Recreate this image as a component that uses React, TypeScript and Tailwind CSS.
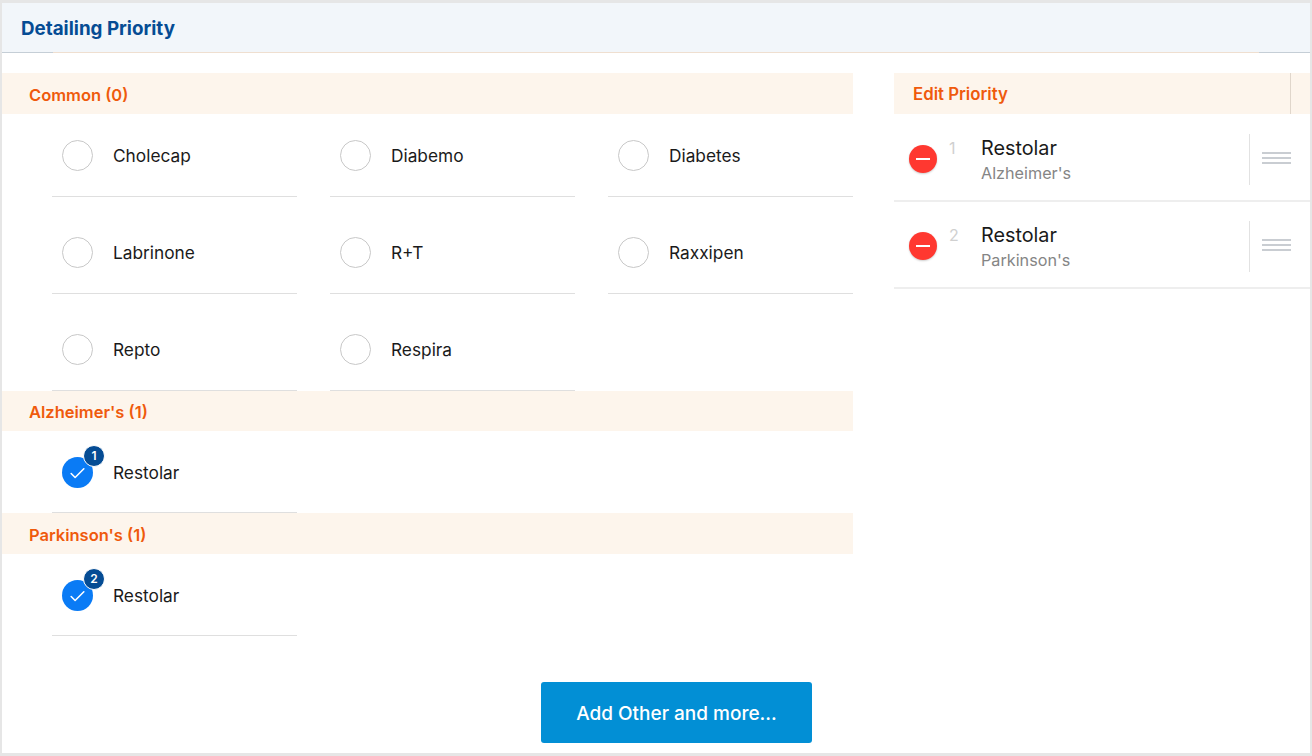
import React from 'react';
import { Check } from 'lucide-react';

const font = "font-['Inter','Noto_Sans',sans-serif]";

type Item = { name: string; badge?: number };

const SectionTitle = ({ title, short }: { title: string; short?: boolean }) => (
  <div className={`${short ? 'h-[40px] pt-[2px]' : 'h-[41px] pt-[3px]'} shrink-0 bg-[#fdf5ec] pl-[27px] flex items-center text-[16.5px] font-semibold text-[#ef5a0c]`}>
    {title}
  </div>
);

const Option = ({ name, badge, dense }: Item & { dense?: boolean }) => (
  <div className={`${dense ? 'h-[82px] pt-[2px]' : 'h-[83px]'} border-b border-[#dfdfdf] pl-[10px] flex items-center`}>
    {badge ? (
      <span className="relative w-[31px] h-[31px] rounded-full bg-[#0a7bf5] flex items-center justify-center">
        <Check size={19} strokeWidth={2} className="text-white mt-[2px]" />
        <span className="absolute -top-[12px] -right-[12px] w-[22px] h-[22px] rounded-full bg-[#054c94] border border-white text-white text-[12px] font-semibold flex items-center justify-center">
          {badge}
        </span>
      </span>
    ) : (
      <span className="w-[31px] h-[31px] rounded-full border-[1.5px] border-[#c8c8c8]" />
    )}
    <span className="ml-5 mt-px text-[17.3px] text-[#1a1a1a]">{name}</span>
  </div>
);

const OptionGrid = ({ items, dense }: { items: Item[]; dense?: boolean }) => (
  <div className="grid grid-cols-3 gap-x-[33px] gap-y-[14px] pl-[50px]">
    {items.map((item) => (
      <Option key={item.name} dense={dense} {...item} />
    ))}
  </div>
);

const PriorityRow = ({ n, name, group }: { n: number; name: string; group: string }) => (
  <div className="h-[87px] border-b-2 border-[#eeeeee] flex items-center">
    <span className="ml-[15px] mt-[3px] w-7 h-7 rounded-full bg-[#ff3830] shadow-[0_1px_2px_rgba(0,0,0,0.2)] flex items-center justify-center">
      <span className="w-[14px] h-[2px] bg-white" />
    </span>
    <span className="ml-3 w-[32px] self-start mt-[23px] text-[16px] leading-5 text-[#d0d0d0]">{n}</span>
    <div className="flex-1 self-start mt-[21px]">
      <div className="text-[19.8px] leading-6 text-[#1a1a1a]">{name}</div>
      <div className="mt-[3px] text-[16.2px] leading-5 text-[#858585]">{group}</div>
    </div>
    <div className="w-[61px] h-[51px] mt-[4px] border-l border-[#e2e2e2] flex flex-col justify-center gap-[3px] pl-[12px] pb-[4px]">
      <span className="w-[29px] h-[2px] bg-[#c9cdd2]" />
      <span className="w-[29px] h-[2px] bg-[#c9cdd2]" />
      <span className="w-[29px] h-[2px] bg-[#c9cdd2]" />
    </div>
  </div>
);

const App: React.FC = () => {
  return (
    <div className={`${font} w-[1312px] h-[756px] bg-white border-t-[3px] border-x-2 border-b-[3px] border-[#e6e6e6] flex flex-col overflow-hidden`}>
      <div className="relative h-[50px] shrink-0 bg-[#f2f6fa] border-b border-[#efdfd0] pl-[19px] pt-[3px] flex items-center">
        <h1 className="text-[18.8px] font-bold text-[#054c94]">Detailing Priority</h1>
        <span className="absolute left-0 -bottom-px w-[51px] h-px bg-[#c5ced6]" />
        <span className="absolute right-0 -bottom-px w-[51px] h-px bg-[#c5ced6]" />
      </div>

      <div className="flex flex-1 pt-5">
        <div className="w-[851px] flex flex-col">
          <SectionTitle title="Common (0)" />
          <OptionGrid
            items={[
              { name: 'Cholecap' },
              { name: 'Diabemo' },
              { name: 'Diabetes' },
              { name: 'Labrinone' },
              { name: 'R+T' },
              { name: 'Raxxipen' },
              { name: 'Repto' },
              { name: 'Respira' },
            ]}
          />
          <SectionTitle short title="Alzheimer's (1)" />
          <OptionGrid dense items={[{ name: 'Restolar', badge: 1 }]} />
          <SectionTitle title="Parkinson's (1)" />
          <OptionGrid dense items={[{ name: 'Restolar', badge: 2 }]} />
          <div className="flex justify-end mt-[46px] pr-[41px]">
            <button className="w-[271px] h-[61px] pt-[3px] rounded-[3px] bg-[#028fd5] text-white text-[19px] font-medium">
              Add Other and more...
            </button>
          </div>
        </div>

        <div className="ml-[41px] flex-1 flex flex-col">
          <div className="h-[41px] mb-px bg-[#fdf5ec] flex items-center pl-[19px] text-[16.8px] font-semibold text-[#ef5a0c]">
            <span className="flex-1 pt-[3px]">Edit Priority</span>
            <span className="w-[20px] h-[41px] border-l border-[#e0d6cb]" />
          </div>
          <PriorityRow n={1} name="Restolar" group="Alzheimer's" />
          <PriorityRow n={2} name="Restolar" group="Parkinson's" />
        </div>
      </div>
    </div>
  );
};

export default App;
